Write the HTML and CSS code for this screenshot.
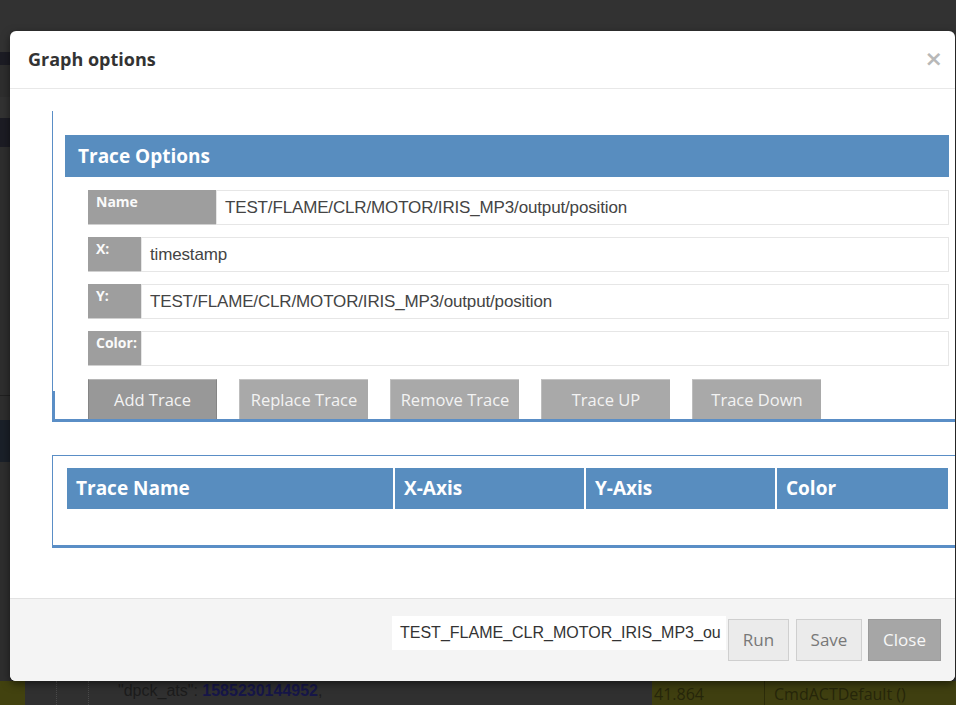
FILE: index.html
```html
<!DOCTYPE html>
<html>
<head>
<meta charset="utf-8">
<title>Graph options</title>
<link rel="stylesheet" href="styles.css">
</head>
<body>
<div class="page">
  <div class="page-main">
    <div class="sidebar">
      <div class="band h52"></div>
      <div class="band navy h13"></div>
      <div class="band mid h32"></div>
      <div class="band h21"></div>
      <div class="band navy h29"></div>
      <div class="band mid h248"></div>
      <div class="band line"></div>
      <div class="band mid h24"></div>
      <div class="band navy2 h42"></div>
      <div class="band mid fill"></div>
    </div>
  </div>
  <div class="page-row">
    <div class="olive-edge"></div>
    <div class="json-cell">
      <span class="dots"></span><span class="dots"></span>
      <span class="json-text"><span class="key">"dpck_ats": </span><span class="num">1585230144952</span>,</span>
    </div>
    <div class="olive-cell time">41.864</div>
    <div class="olive-cell cmd">CmdACTDefault ()</div>
  </div>
</div>

<div class="modal">
  <div class="modal-header">
    <h4 class="modal-title">Graph options</h4>
    <span class="close">&times;</span>
  </div>
  <div class="modal-body">
    <div class="panel trace-panel">
      <div class="panel-heading">Trace Options</div>
      <div class="fields">
        <div class="field">
          <div class="field-label wide">Name</div>
          <div class="field-input">TEST/FLAME/CLR/MOTOR/IRIS_MP3/output/position</div>
        </div>
        <div class="field">
          <div class="field-label">X:</div>
          <div class="field-input">timestamp</div>
        </div>
        <div class="field">
          <div class="field-label">Y:</div>
          <div class="field-input">TEST/FLAME/CLR/MOTOR/IRIS_MP3/output/position</div>
        </div>
        <div class="field">
          <div class="field-label">Color:</div>
          <div class="field-input"></div>
        </div>
      </div>
      <div class="actions">
        <button class="act active">Add Trace</button>
        <button class="act">Replace Trace</button>
        <button class="act">Remove Trace</button>
        <button class="act">Trace UP</button>
        <button class="act">Trace Down</button>
      </div>
    </div>

    <div class="panel table-panel">
      <div class="table-head">
        <div class="th">Trace Name</div>
        <div class="th">X-Axis</div>
        <div class="th">Y-Axis</div>
        <div class="th">Color</div>
      </div>
    </div>
  </div>
  <div class="modal-footer">
    <div class="file-name">TEST_FLAME_CLR_MOTOR_IRIS_MP3_ou</div>
    <button class="btn run">Run</button>
    <button class="btn save">Save</button>
    <button class="btn close-btn">Close</button>
  </div>
</div>
</body>
</html>
```

FILE: styles.css
```css
* { box-sizing: border-box; }

html, body {
  margin: 0;
  padding: 0;
  height: 705px;
  overflow: hidden;
}

body {
  background: #323232;
  font-family: "Open Sans", "Noto Sans", sans-serif;
}

/* ---------- dimmed page behind the dialog ---------- */
.page {
  height: 705px;
  display: flex;
  flex-direction: column;
}

.page-main {
  flex: 1;
  display: flex;
}

.sidebar {
  width: 30px;
  display: flex;
  flex-direction: column;
}

.band { background: #323232; }
.band.navy { background: #1c1c24; }
.band.navy2 { background: #1a2029; }
.band.mid { background: #2e2e2e; }
.band.line { height: 1px; background: #202020; }
.h52 { height: 52px; }
.h13 { height: 13px; }
.h32 { height: 32px; }
.h21 { height: 21px; }
.h29 { height: 29px; }
.h248 { height: 248px; }
.h24 { height: 24px; }
.h42 { height: 42px; }
.fill { flex: 1; }

.page-row {
  height: 24px;
  display: flex;
  background: #303030;
}

.olive-edge {
  width: 25px;
  background: #42420f;
}

.json-cell {
  width: 627px;
  display: flex;
  align-items: flex-start;
  background: #303030;
}

.dots {
  width: 32px;
  height: 24px;
  border-right: 1px dotted #4a4a4a;
}

.json-text {
  margin-left: 29px;
  font-family: "Liberation Sans", Arial, sans-serif;
  font-size: 16px;
  line-height: 18px;
  color: #1c1c1c;
  padding-top: 1px;
}

.json-text .num {
  color: #161648;
  font-weight: bold;
}

.olive-cell {
  background: #3f3f10;
  color: #26260a;
  font-family: "Open Sans", sans-serif;
  font-size: 16px;
  line-height: 20px;
  padding-top: 3px;
  white-space: nowrap;
}

.olive-cell.time {
  width: 113px;
  padding-left: 2px;
  border-right: 1px solid #2c2c0a;
}

.olive-cell.cmd {
  flex: 1;
  padding-left: 9px;
}

/* ---------- dialog ---------- */
.modal {
  position: absolute;
  left: 10px;
  top: 31px;
  width: 945px;
  height: 650px;
  background: #fff;
  border-radius: 6px;
  overflow: hidden;
  display: flex;
  flex-direction: column;
  box-shadow: 0 3px 9px rgba(0, 0, 0, 0.5);
}

.modal-header {
  height: 58px;
  flex: none;
  border-bottom: 1px solid #e8e8e8;
  display: flex;
  align-items: center;
  justify-content: space-between;
  padding: 0 16px 0 18px;
}

.modal-title {
  margin: 0;
  font-size: 18px;
  font-weight: 700;
  color: #333;
  line-height: 24px;
  padding-bottom: 2px;
}

.close {
  font-family: "DejaVu Sans", sans-serif;
  font-size: 22px;
  font-weight: 700;
  color: #b8b8b8;
  line-height: 24px;
  padding-bottom: 2px;
  margin-right: -4px;
}

.modal-body {
  flex: 1;
  padding: 22px 0 0 42px;
}

.panel {
  border-left: 1px solid #5a8ec6;
  border-bottom: 3px solid #5a8ec6;
}

.trace-panel {
  padding: 24px 6px 0 12px;
  background: linear-gradient(#5a8ec6, #5a8ec6) left bottom / 2px 28px no-repeat;
}

.panel-heading {
  height: 42px;
  background: #588dbf;
  color: #fff;
  font-weight: 700;
  font-size: 19px;
  line-height: 42px;
  padding-left: 13px;
}

.fields {
  margin-top: 13px;
  padding-left: 23px;
  display: flex;
  flex-direction: column;
  gap: 12px;
}

.field {
  display: flex;
  height: 35px;
}

.field-label {
  width: 53px;
  flex: none;
  background: #9e9e9e;
  border-bottom: 1px solid #d0d0d0;
  color: #fafafa;
  font-size: 14px;
  font-weight: 700;
  line-height: 18px;
  padding: 3px 0 0 8px;
}

.field-label.wide { width: 128px; }

.field-input {
  flex: 1;
  border: 1px solid #e6e6e6;
  background: #fff;
  font-family: "Liberation Sans", Arial, sans-serif;
  font-size: 17px;
  letter-spacing: -0.15px;
  color: #444;
  line-height: 33px;
  padding-left: 8px;
  white-space: nowrap;
  overflow: hidden;
}

.actions {
  margin-top: 13px;
  padding-left: 23px;
  display: flex;
  gap: 22px;
  height: 40px;
}

.act {
  width: 129px;
  height: 40px;
  margin: 0;
  background: #a9a9a9;
  border: none;
  border-top: 1px solid #c4c4c4;
  border-left: 1px solid #bdbdbd;
  color: #f3f3f3;
  font-family: "Open Sans", sans-serif;
  font-size: 16.5px;
  padding: 0;
  line-height: 38px;
}

.act.active {
  background: #989898;
  border: 1px solid #858585;
  border-top-color: #b5b5b5;
  border-bottom: none;
}

.table-panel {
  margin-top: 33px;
  border-top: 1px solid #5a8ec6;
  padding: 12px 7px 36px 14px;
}

.table-head {
  display: grid;
  grid-template-columns: 326px 189px 189px 1fr;
  column-gap: 2px;
  height: 41px;
}

.th {
  background: #588dbf;
  color: #fff;
  font-weight: 700;
  font-size: 19px;
  line-height: 41px;
  padding-left: 9px;
}

.modal-footer {
  height: 83px;
  flex: none;
  border-top: 1px solid #e2e2e2;
  background: #f4f4f4;
  display: flex;
  justify-content: flex-end;
  align-items: flex-start;
  padding: 17px 14px 0 0;
}

.file-name {
  width: 334px;
  height: 34px;
  background: #fff;
  font-family: "Liberation Sans", Arial, sans-serif;
  font-size: 16px;
  color: #333;
  line-height: 34px;
  padding-left: 8px;
  white-space: nowrap;
  overflow: hidden;
  margin-right: 2px;
}

.btn {
  margin: 3px 0 0 0;
  height: 42px;
  padding: 0 0 2px 0;
  font-family: "Open Sans", sans-serif;
  font-size: 17px;
  background: #ebebeb;
  border: 1px solid #cfcfcf;
  color: #787878;
}

.btn.run { width: 61px; margin-right: 7px; }
.btn.save { width: 66px; margin-right: 6px; }
.btn.close-btn {
  width: 73px;
  background: #a6a6a6;
  border-color: #9b9b9b;
  color: #f7f7f7;
}
```
